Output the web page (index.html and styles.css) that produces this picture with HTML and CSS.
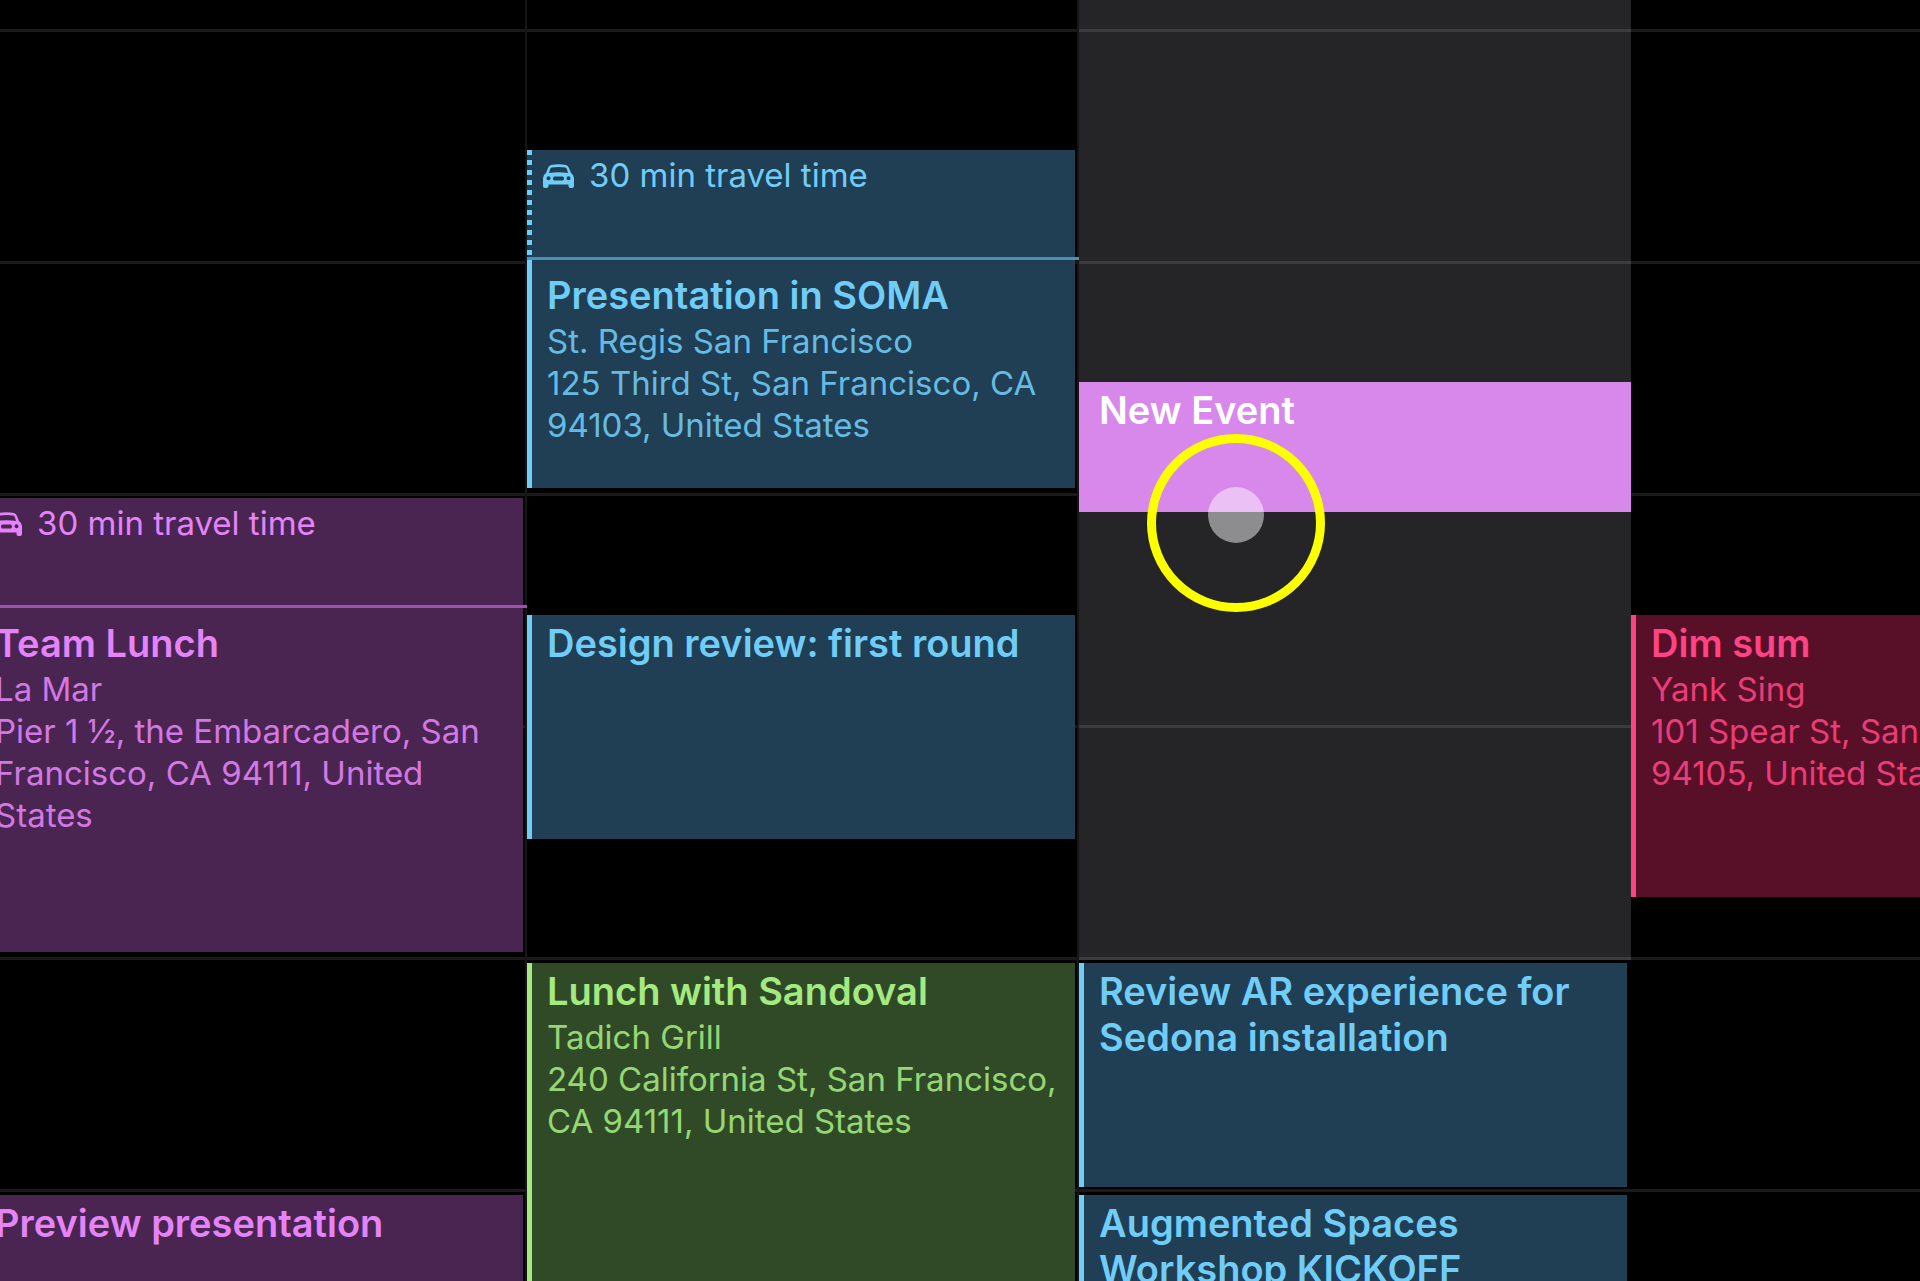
FILE: index.html
```html
<!DOCTYPE html>
<html lang="en">
<head>
    <meta charset="UTF-8">
    <meta name="viewport" content="width=device-width, initial-scale=1.0">
    <title>Calendar</title>
    <link rel="stylesheet" href="styles.css">
</head>
<body>
    <svg class="symbols" aria-hidden="true">
        <symbol id="car" viewBox="0 0 31 24">
            <path fill="currentColor" fill-rule="evenodd" d="M8 1 Q15.500 -0.500 23 1 Q25 1.500 26 4 L28 9 Q31 11 31 14 V22 Q31 24 29 24 H27.500 Q25.500 24 25.500 22 V20.500 H5.500 V22 Q5.500 24 3.500 24 H2 Q0 24 0 22 V14 Q0 11 3 9 L5 4 Q6 1.500 8 1 Z M8.500 3.500 Q7.500 4 7 5.500 L6 9 Q15.500 7.500 25 9 L24 5.500 Q23.500 4 22.500 3.500 Q15.500 2.500 8.500 3.500 Z M5.500 12.200 A2 2 0 1 0 5.500 16.200 A2 2 0 1 0 5.500 12.200 Z M25.500 12.200 A2 2 0 1 0 25.500 16.200 A2 2 0 1 0 25.500 12.200 Z M11.500 12.500 Q10 12.500 10 14.500 Q10 16.500 11.500 16.500 H19.500 Q21 16.500 21 14.500 Q21 12.500 19.500 12.500 Z"/>
        </symbol>
    </svg>

    <main class="calendar">
        <section class="day">
            <article class="event purple with-travel team-lunch">
                <div class="travel">
                    <svg class="car"><use href="#car"/></svg>
                    <span>30 min travel time</span>
                </div>
                <hr class="divider">
                <div class="info">
                    <h2>Team Lunch</h2>
                    <p>La Mar</p>
                    <p>Pier 1 ½, the Embarcadero, San Francisco, CA 94111, United States</p>
                </div>
            </article>
            <article class="event purple preview">
                <div class="info">
                    <h2>Preview presentation</h2>
                </div>
            </article>
        </section>

        <section class="day">
            <article class="event blue with-travel soma">
                <div class="travel">
                    <svg class="car"><use href="#car"/></svg>
                    <span>30 min travel time</span>
                </div>
                <hr class="divider">
                <div class="info">
                    <h2>Presentation in SOMA</h2>
                    <p>St. Regis San Francisco</p>
                    <p>125 Third St, San Francisco, CA 94103, United States</p>
                </div>
            </article>
            <article class="event blue design-review">
                <div class="info">
                    <h2>Design review: first round</h2>
                </div>
            </article>
            <article class="event green sandoval">
                <div class="info">
                    <h2>Lunch with Sandoval</h2>
                    <p>Tadich Grill</p>
                    <p>240 California St, San Francisco, CA 94111, United States</p>
                </div>
            </article>
        </section>

        <section class="day selected">
            <article class="event new-event">
                <h2>New Event</h2>
            </article>
            <article class="event blue ar-review">
                <div class="info">
                    <h2>Review AR experience for Sedona installation</h2>
                </div>
            </article>
            <article class="event blue kickoff">
                <div class="info">
                    <h2>Augmented Spaces Workshop KICKOFF</h2>
                </div>
            </article>
            <div class="touch-ring"></div>
            <div class="touch-dot"></div>
        </section>

        <section class="day">
            <article class="event pink dim-sum">
                <div class="info">
                    <h2>Dim sum</h2>
                    <p>Yank Sing</p>
                    <p>101 Spear St, San Francisco, CA 94105, United States</p>
                </div>
            </article>
        </section>
    </main>
</body>
</html>
```

FILE: styles.css
```css
* {
    box-sizing: border-box;
}
body {
    margin: 0;
    background: #000;
    font-family: Inter, "Liberation Sans", sans-serif;
    overflow: hidden;
}
h2, p {
    margin: 0;
}
h2 {
    margin-bottom: 2px;
    font-size: 38px;
    line-height: 46px;
    font-weight: 600;
}
p, .travel {
    font-size: 33px;
    line-height: 42px;
}
.symbols {
    display: none;
}

/* one column per day, quarter-hour rows */
.calendar {
    display: grid;
    grid-template-columns: repeat(4, 28.75vw);
    height: 100vh;
    margin-left: -25px;
    overflow: hidden;
}
.day {
    position: relative;
    display: grid;
    grid-template-rows: 31px repeat(22, 58px);
    height: 100vh;
    border-right: 2px solid #151515;
    background-image: linear-gradient(rgba(255, 255, 255, 0.1) 3px, transparent 3px);
    background-size: 100% 232px;
    background-position: 0 29px;
}
/* the shade stops where the first booked slot starts */
.day.selected {
    border-right: 0;
    background-image:
        linear-gradient(rgba(255, 255, 255, 0.1) 3px, transparent 3px),
        linear-gradient(#252427, #252427);
    background-size: 100% 232px, 100% 960px;
    background-position: 0 29px, 0 0;
    background-repeat: repeat, no-repeat;
}

.event {
    display: flex;
    flex-direction: column;
    margin: 4px 2px 4px 0;
    background: var(--fill);
    color: var(--tint);
}
.selected .event {
    margin-right: 4px;
}
.with-travel {
    margin-top: 3px;
    margin-bottom: 7px;
}
.info {
    flex: 1;
    padding: 5px 12px 0 15px;
    border-left: 5px solid var(--tint);
}
.with-travel .info {
    padding-top: 12px;
}
.info p {
    opacity: 0.88;
}
.travel {
    display: flex;
    gap: 15px;
    height: 107px;
    padding: 4px 0 0 16px;
    background: linear-gradient(var(--tint) 5px, transparent 5px) 0 0 / 5px 10px repeat-y;
}
.car {
    width: 31px;
    height: 24px;
    margin-top: 10px;
}
.divider {
    height: 3px;
    margin: 0 -4px 0 0;
    border: 0;
    background: var(--line);
    z-index: 1;
}

.blue {
    --fill: #203f54;
    --tint: #70cdf8;
    --line: #4890b4;
}
.purple {
    --fill: #4a2552;
    --tint: #e484f8;
    --line: #a050b2;
}
.green {
    --fill: #304a28;
    --tint: #a4ea80;
}
.pink {
    --fill: #580f28;
    --tint: #ff4484;
}

.soma { grid-row: 4 / 10; }
.team-lunch { grid-row: 10 / 18; }
.design-review { grid-row: 12 / 16; }
.dim-sum { grid-row: 12 / 17; }
.sandoval { grid-row: 18 / 24; }
.ar-review { grid-row: 18 / 22; }
.preview { grid-row: 22 / 24; }
.kickoff { grid-row: 22 / 24; }

.selected .new-event {
    grid-row: 8 / 11;
    margin: 3px 0 41px;
    padding: 5px 20px 0;
    background: #d887ea;
    color: #fff;
}

.touch-ring, .touch-dot {
    position: absolute;
    border-radius: 50%;
}
.touch-ring {
    top: 434px;
    left: 68px;
    width: 178px;
    height: 178px;
    border: 9px solid #fbff00;
}
.touch-dot {
    top: 487px;
    left: 129px;
    width: 56px;
    height: 56px;
    background: rgba(255, 255, 255, 0.48);
}
```
